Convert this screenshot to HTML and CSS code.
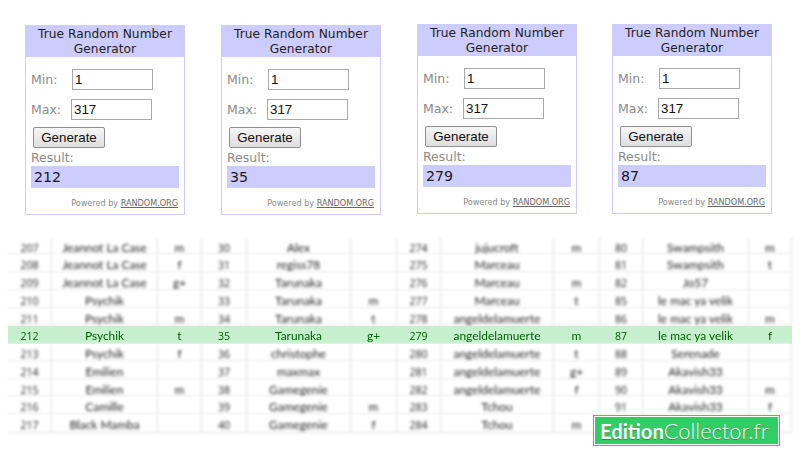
FILE: index.html
```html
<!DOCTYPE html>
<html lang="fr">
<head>
<meta charset="utf-8">
<title>True Random Number Generator</title>
<link rel="stylesheet" href="styles.css">
</head>
<body>
<main class="page">
  <section class="widgets">
    <div class="widget lower first">
      <h2 class="title">True Random Number Generator</h2>
      <div class="form">
        <div class="field"><span class="label">Min:</span><span class="input">1</span></div>
        <div class="field"><span class="label">Max:</span><span class="input">317</span></div>
        <span class="button">Generate</span>
        <div class="label">Result:</div>
        <div class="result">212</div>
        <div class="powered">Powered by <u>RANDOM.ORG</u></div>
      </div>
    </div>
    <div class="widget lower">
      <h2 class="title">True Random Number Generator</h2>
      <div class="form">
        <div class="field"><span class="label">Min:</span><span class="input">1</span></div>
        <div class="field"><span class="label">Max:</span><span class="input">317</span></div>
        <span class="button">Generate</span>
        <div class="label">Result:</div>
        <div class="result">35</div>
        <div class="powered">Powered by <u>RANDOM.ORG</u></div>
      </div>
    </div>
    <div class="widget">
      <h2 class="title">True Random Number Generator</h2>
      <div class="form">
        <div class="field"><span class="label">Min:</span><span class="input">1</span></div>
        <div class="field"><span class="label">Max:</span><span class="input">317</span></div>
        <span class="button">Generate</span>
        <div class="label">Result:</div>
        <div class="result">279</div>
        <div class="powered">Powered by <u>RANDOM.ORG</u></div>
      </div>
    </div>
    <div class="widget tight">
      <h2 class="title">True Random Number Generator</h2>
      <div class="form">
        <div class="field"><span class="label">Min:</span><span class="input">1</span></div>
        <div class="field"><span class="label">Max:</span><span class="input">317</span></div>
        <span class="button">Generate</span>
        <div class="label">Result:</div>
        <div class="result">87</div>
        <div class="powered">Powered by <u>RANDOM.ORG</u></div>
      </div>
    </div>
  </section>

  <section class="sheet">
    <div class="row"><span>207</span><span>Jeannot La Case</span><span>m</span><span>30</span><span>Alex</span><span></span><span>274</span><span>jujucroft</span><span>m</span><span>80</span><span>Swampsith</span><span>m</span></div>
    <div class="row"><span>208</span><span>Jeannot La Case</span><span>f</span><span>31</span><span>regiss78</span><span></span><span>275</span><span>Marceau</span><span></span><span>81</span><span>Swampsith</span><span>t</span></div>
    <div class="row"><span>209</span><span>Jeannot La Case</span><span>g+</span><span>32</span><span>Tarunaka</span><span></span><span>276</span><span>Marceau</span><span>m</span><span>82</span><span>Jo57</span><span></span></div>
    <div class="row"><span>210</span><span>Psychik</span><span></span><span>33</span><span>Tarunaka</span><span>m</span><span>277</span><span>Marceau</span><span>t</span><span>85</span><span>le mac ya velik</span><span></span></div>
    <div class="row"><span>211</span><span>Psychik</span><span>m</span><span>34</span><span>Tarunaka</span><span>t</span><span>278</span><span>angeldelamuerte</span><span></span><span>86</span><span>le mac ya velik</span><span>m</span></div>
    <div class="row winner"><span>212</span><span>Psychik</span><span>t</span><span>35</span><span>Tarunaka</span><span>g+</span><span>279</span><span>angeldelamuerte</span><span>m</span><span>87</span><span>le mac ya velik</span><span>f</span></div>
    <div class="row"><span>213</span><span>Psychik</span><span>f</span><span>36</span><span>christophe</span><span></span><span>280</span><span>angeldelamuerte</span><span>t</span><span>88</span><span>Serenade</span><span></span></div>
    <div class="row"><span>214</span><span>Emilien</span><span></span><span>37</span><span>maxmax</span><span></span><span>281</span><span>angeldelamuerte</span><span>g+</span><span>89</span><span>Akavish33</span><span></span></div>
    <div class="row"><span>215</span><span>Emilien</span><span>m</span><span>38</span><span>Gamegenie</span><span></span><span>282</span><span>angeldelamuerte</span><span>f</span><span>90</span><span>Akavish33</span><span>m</span></div>
    <div class="row"><span>216</span><span>Camille</span><span></span><span>39</span><span>Gamegenie</span><span>m</span><span>283</span><span>Tchou</span><span></span><span>91</span><span>Akavish33</span><span>f</span></div>
    <div class="row"><span>217</span><span>Black Mamba</span><span></span><span>40</span><span>Gamegenie</span><span>f</span><span>284</span><span>Tchou</span><span>m</span><span></span><span></span><span></span></div>
  </section>

  <div class="logo"><strong>Edition</strong>Collector.fr</div>
</main>
</body>
</html>
```

FILE: styles.css
```css
* { box-sizing: border-box; }

html, body {
  margin: 0;
  background: #fff;
}

.page {
  position: relative;
  width: 800px;
  height: 465px;
  overflow: hidden;
  padding: 24px 0 0 25px;
}

.widgets {
  display: flex;
  align-items: flex-start;
  gap: 36px;
  height: 213.5px;
}

.widget {
  width: 160px;
  height: 190px;
  border: 1px solid #ccccff;
  flex: none;
  font-family: "DejaVu Sans", sans-serif;
}

.lower { margin-top: 1px; }
.tight { margin-left: -1px; }

.title {
  margin: -1px -1px 0;
  height: 32px;
  background: #ccccff;
  color: #222;
  font-size: 12.2px;
  font-weight: 400;
  letter-spacing: 0.05px;
  line-height: 15px;
  text-align: center;
  padding: 2px 0 0;
}

.form {
  padding: 12px 5px 0;
}

.field {
  display: flex;
  align-items: center;
  height: 21px;
  margin-bottom: 9px;
}

.field .label {
  width: 40px;
  flex: none;
}

.field:first-child .label {
  width: 41px;
}

.label {
  color: #8a8a8a;
  font-size: 12.5px;
  line-height: 15px;
}

.input {
  width: 81px;
  height: 21px;
  border: 1px solid #a9a9a9;
  padding-left: 2px;
  font: 13.33px/19px "Liberation Sans", sans-serif;
  color: #111;
  background: #fff;
}

.button {
  display: block;
  width: 72px;
  height: 21px;
  margin: -2px 0 0 2px;
  border: 1px solid #8f8f8f;
  border-radius: 2px;
  background: linear-gradient(#f6f6f6, #dedede);
  font: 13.33px/19px "Liberation Sans", sans-serif;
  color: #111;
  text-align: center;
}

.button + .label {
  margin-top: 2px;
}

.result {
  width: 148px;
  height: 22px;
  margin-top: 1px;
  padding-left: 3px;
  background: #ccccff;
  color: #1a1a1a;
  font-size: 14.2px;
  line-height: 23px;
}

.powered {
  margin-top: 10px;
  padding-right: 1px;
  text-align: right;
  color: #8a8a8a;
  font-size: 8.1px;
  line-height: 10px;
}

.powered u { color: #666; }

.sheet {
  width: 784px;
  margin-left: -17px;
  display: grid;
  grid-auto-rows: 17.75px;
  font-family: "Lato", sans-serif;
  font-size: 11.9px;
  color: #222;
}

.row {
  display: grid;
  grid-template-columns: 44px 106px 44px 45px 104px 46px 44px 113px 46px 43px 106px 43px;
  filter: blur(1.4px);
  background: #fff;
}

.row span {
  display: block;
  height: 17.75px;
  text-align: center;
  line-height: 20px;
  border-right: 1px solid #dedede;
  border-bottom: 1px solid #dedede;
}

.row span:nth-child(3n+1) {
  font-family: "Open Sans", sans-serif;
  font-size: 10.6px;
}

.winner {
  filter: blur(0.35px);
  background: #c6efce;
  color: #006100;
}

.winner span { border-color: transparent; }

.logo {
  position: absolute;
  left: 593px;
  top: 415px;
  width: 187px;
  height: 31px;
  background: #33cc66;
  border: 1px solid #33cc66;
  outline: 1px solid #fff;
  outline-offset: -2px;
  color: #fff;
  font: 300 21.8px/29px "Lato", sans-serif;
  padding-left: 6px;
  text-shadow: 0 1px 1px rgba(0, 0, 0, .3);
  white-space: nowrap;
}

.logo strong {
  font-size: 20.2px;
  font-weight: 700;
}
```
